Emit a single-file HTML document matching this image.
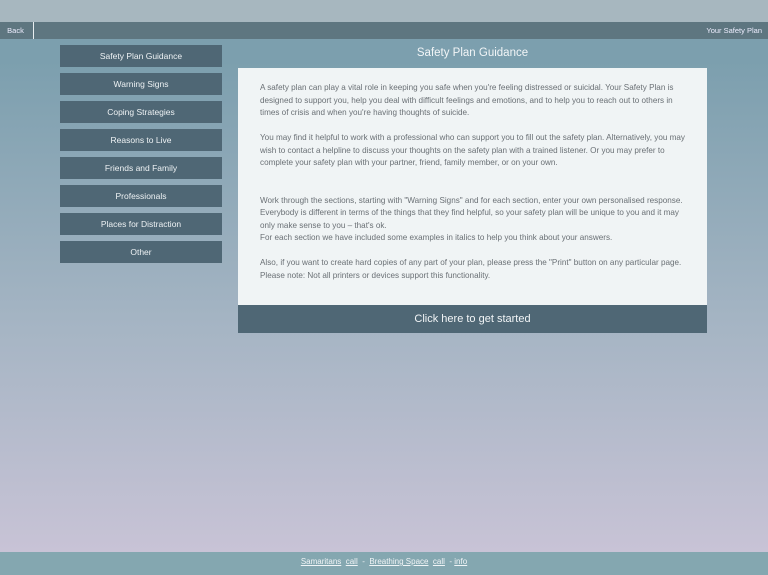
<!DOCTYPE html>
<html><head><style>
*{margin:0;padding:0;box-sizing:border-box}
body{width:768px;height:575px;overflow:hidden;position:relative;font-family:"Liberation Sans",sans-serif;background:linear-gradient(#7b9fae 0px,#7c9fae 60px,#a6b5c4 330px,#c8c3d6 552px);}
.top{position:absolute;left:0;top:0;width:768px;height:22px;background:#a7b7bf}
.nav{position:absolute;left:0;top:22px;width:768px;height:17px;background:#5e7680;color:#eef;font-size:7.5px;line-height:17px}
.nav .back{position:absolute;left:0;top:0;width:34px;height:17px;border-right:1px solid #e8eef0;text-align:center;padding-right:2px}
.nav .r{position:absolute;right:6px;top:0}
.btn{position:absolute;left:60px;width:162px;height:22px;background:#4f6775;color:#eef2f4;font-size:8.5px;line-height:23px;text-align:center}
h1{position:absolute;left:238px;width:469px;top:47px;text-align:center;font-weight:normal;color:#f2f5f7;font-size:11.5px}
.panel{position:absolute;left:238px;top:68px;width:469px;height:237px;background:#f0f4f5;padding:14px 10px 0 22px;color:#6a7075;font-size:8.15px;line-height:12.5px;white-space:nowrap}
.panel p{margin-bottom:12.5px}
.go{position:absolute;left:238px;top:305px;width:469px;height:28px;background:#4f6775;color:#f2f5f7;font-size:11px;line-height:29px;text-align:center}
.foot{position:absolute;left:0;top:552px;width:768px;height:23px;background:#84a7b0;color:#f0f4f6;font-size:8px;line-height:20px;text-align:center}
.foot u{text-decoration:underline}
</style></head><body>
<div class="top"></div>
<div class="nav"><div class="back">Back</div><div class="r">Your Safety Plan</div></div>
<div class="btn" style="top:45px">Safety Plan Guidance</div>
<div class="btn" style="top:73px">Warning Signs</div>
<div class="btn" style="top:101px">Coping Strategies</div>
<div class="btn" style="top:129px">Reasons to Live</div>
<div class="btn" style="top:157px">Friends and Family</div>
<div class="btn" style="top:185px">Professionals</div>
<div class="btn" style="top:213px">Places for Distraction</div>
<div class="btn" style="top:241px">Other</div>
<h1>Safety Plan Guidance</h1>
<div class="panel">
<p>A safety plan can play a vital role in keeping you safe when you're feeling distressed or suicidal. Your Safety Plan is<br>designed to support you, help you deal with difficult feelings and emotions, and to help you to reach out to others in<br>times of crisis and when you're having thoughts of suicide.</p>
<p>You may find it helpful to work with a professional who can support you to fill out the safety plan. Alternatively, you may<br>wish to contact a helpline to discuss your thoughts on the safety plan with a trained listener. Or you may prefer to<br>complete your safety plan with your partner, friend, family member, or on your own.</p>
<p style="margin-top:25px;margin-bottom:0">Work through the sections, starting with "Warning Signs" and for each section, enter your own personalised response.<br>Everybody is different in terms of the things that they find helpful, so your safety plan will be unique to you and it may<br>only make sense to you – that's ok.</p>
<p>For each section we have included some examples in italics to help you think about your answers.</p>
<p>Also, if you want to create hard copies of any part of your plan, please press the "Print" button on any particular page.<br>Please note: Not all printers or devices support this functionality.</p>
</div>
<div class="go">Click here to get started</div>
<div class="foot"><u>Samaritans</u>&nbsp; <u>call</u> &nbsp;-&nbsp; <u>Breathing Space</u>&nbsp; <u>call</u> &nbsp;- <u>info</u></div>
</body></html>
